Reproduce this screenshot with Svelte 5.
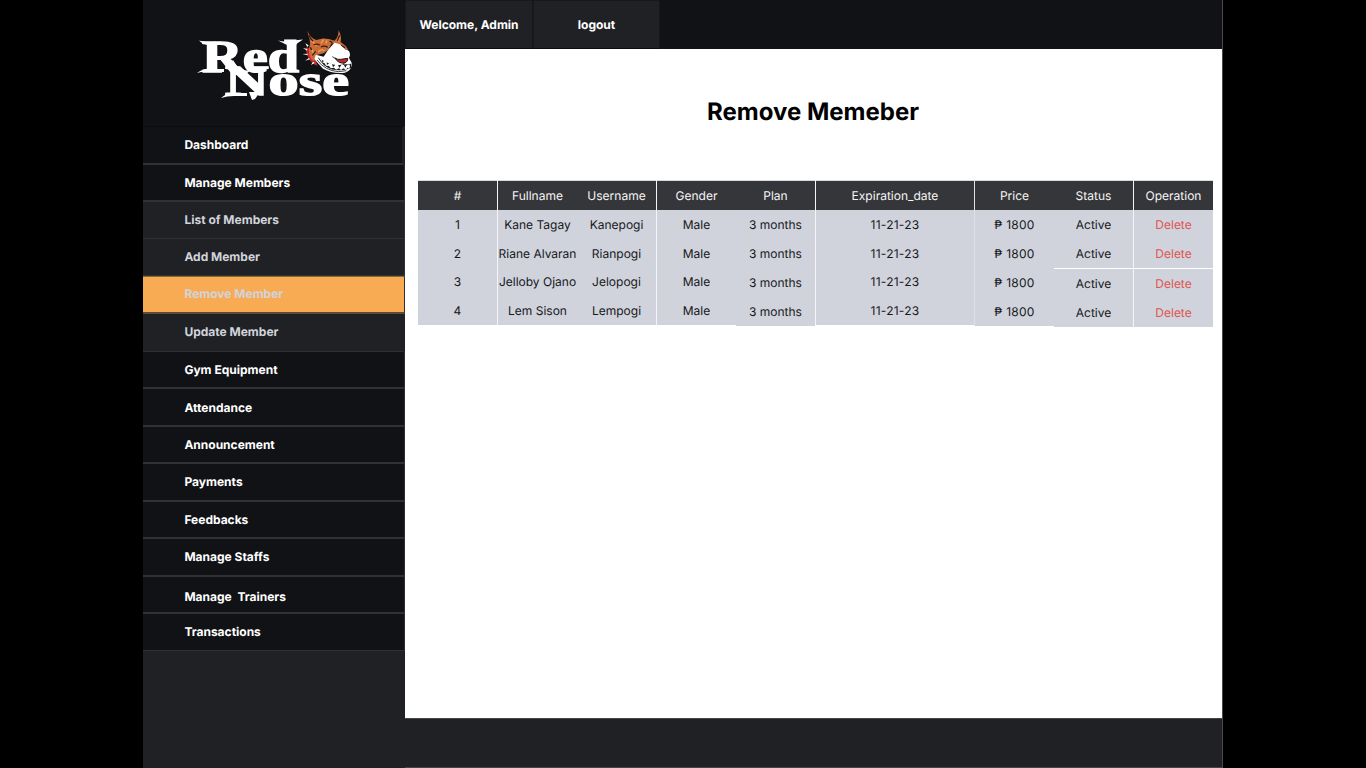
<script>
  const menu = [
    { label: 'Dashboard', kind: 'main inset', h: 39, shift: -1 },
    { label: 'Manage Members', kind: 'main', h: 37, shift: 0 },
    { label: 'List of Members', kind: 'sub', h: 37, shift: -2 },
    { label: 'Add Member', kind: 'sub', h: 37, shift: -2 },
    { label: 'Remove Member', kind: 'sub active', h: 38, shift: -2 },
    { label: 'Update Member', kind: 'sub inset', h: 38, shift: -2 },
    { label: 'Gym Equipment', kind: 'main', h: 37, shift: 0 },
    { label: 'Attendance', kind: 'main', h: 38, shift: 1 },
    { label: 'Announcement', kind: 'main', h: 37, shift: -1 },
    { label: 'Payments', kind: 'main', h: 38, shift: -2 },
    { label: 'Feedbacks', kind: 'main', h: 37, shift: -1 },
    { label: 'Manage Staffs', kind: 'main', h: 38, shift: -1 },
    { label: 'Manage\u00a0 Trainers', kind: 'main', h: 37, shift: 3 },
    { label: 'Transactions', kind: 'main last', h: 37, shift: -2 }
  ];

  const names = ['Kane Tagay', 'Riane Alvaran', 'Jelloby Ojano', 'Lem Sison'];
  const users = ['Kanepogi', 'Rianpogi', 'Jelopogi', 'Lempogi'];
  const four = (v) => [v, v, v, v];
  const columns = [
    { head: '#', cells: ['1', '2', '3', '4'], heights: [29, 29, 28, 29], line: '' },
    { head: 'Fullname', cells: names, heights: [29, 29, 28, 29], line: 'line' },
    { head: 'Username', cells: users, heights: [29, 29, 28, 29], line: '' },
    { head: 'Gender', cells: four('Male'), heights: [29, 29, 28, 29], line: 'line' },
    { head: 'Plan', cells: four('3 months'), heights: [29, 29, 29, 29], line: '' },
    { head: 'Expiration_date', cells: four('11-21-23'), heights: [29, 29, 28, 29], line: 'line', wide: true },
    { head: 'Price', cells: four('₱ 1800'), heights: [29, 29, 29, 29], line: 'faint', wide: true },
    { head: 'Status', cells: four('Active'), heights: [29, 29, 30, 29], line: '', split: true },
    { head: 'Operation', cells: four('Delete'), heights: [29, 29, 30, 29], line: 'line', split: true, danger: true }
  ];
</script>

<div class="screen">
  <div class="app">
    <aside>
      <div class="brand">
        <svg width="170" height="90" viewBox="0 0 170 90" aria-label="Red Nose">
          <g fill="#fff" stroke="#fff" font-family="'Liberation Serif', serif" font-weight="700">
            <text x="12" y="52" font-size="46" textLength="97" lengthAdjust="spacingAndGlyphs" stroke-width="1.4">Red</text>
            <text x="35" y="75" font-size="43" textLength="124" lengthAdjust="spacingAndGlyphs" stroke-width="1.4">Nose</text>
          </g>
          <g fill="#fff">
            <path d="M9 20.500q9 2.500 17 1v3H17q-5-.5-8-4M7 53q8-5 12-4h15v3H20q-7-1-13 1M43 40q7 13 18 10l-5 4q-9 1-17-9z" />
            <path d="M88 20.500q8 2 15 0l10-1-6 4-3 5-8-4zM31 78q6-5 11-5h15v3H44q-7 0-13 2M59 72h11l-5 7-3 1z" />
          </g>
          <g transform="translate(105 2) scale(.3333)">
            <path d="M28 70Q32 108 58 130L72 136 104 156 172 154 178 112 158 70 124 50 60 52z" fill="#111216" />
            <path d="M33 76Q33 100 44 114 54 128 68 131L63 118Q45 104 42 78z" fill="#c2262b" />
            <path d="M24 78l13 3-1 5zM22 96l15-1 2 5zM30 116l12-8 3 4zM48 129l6-10 5 4zM31 64l10 6-4 5z" fill="#fff" />
            <path d="M37 26Q46 48 64 54L80 50Q100 49 118 56 130 48 131 25 141 44 137 60L152 72 160 83Q140 82 130 66L110 64 99 84 86 94 62 100 57 118Q40 108 42 80 47 64 44 52 40 40 37 26z" fill="#cb6c37" />
            <path d="M48 55Q60 62 64 72M86 52L78 64M70 90Q78 80 88 86M50 82L56 94M96 56L92 64M132 46L130 58" fill="none" stroke="#f0a060" stroke-width="4" />
            <path d="M42 40Q46 50 54 58M56 68Q66 64 74 69M78 75Q88 69 98 76M52 100L62 88M134 40L127 57M138 70L150 77M104 57L112 62M46 76L50 84" fill="none" stroke="#3a1b14" stroke-width="4" />
            <path d="M118 62L133 66 150 82Q166 84 165 100L162 108 170 122Q172 145 150 152 112 156 84 140L58 112 62 98 86 104 99 84z" fill="#fff" />
            <path d="M68 106Q96 126 126 130L168 125 168 138Q140 149 108 142 82 132 68 106z" fill="#17181c" />
            <path d="M72 108l8 4 2 9 6-5 7 3 1 10 7-6 8 3 3 10 7-8 8 1 4 9 6-9 8 0 4 8 5-9 7-1 2 5-2 9-5-4-6 7-6-5-8 5-6-5-9 4-6-6-10 2-5-7-9-1-4-7-8-3z" fill="#fff" />
            <path d="M120 108Q128 114 138 112L158 109Q161 117 150 123 130 126 120 108z" fill="#c2262b" stroke="#17181c" stroke-width="3" />
            <path d="M112 104L122 110M146 124L146 129M66 114Q90 146 130 149L154 146" fill="none" stroke="#17181c" stroke-width="2.500" />
          </g>
        </svg>
      </div>
      <nav>
        {#each menu as item}
          <a class={item.kind} style="height:{item.h}px;padding-top:{4 + item.shift}px">{item.label}</a>
        {/each}
      </nav>
    </aside>
    <main>
      <header>
        <span class="tab">Welcome, Admin</span>
        <span class="tab">logout</span>
      </header>
      <section>
        <h1>Remove Memeber</h1>
        <div class="table">
          {#each columns as col}
            <div class="col {col.line}">
              <div class="th">{col.head}</div>
              {#each col.cells as cell, i}
                <div class="td" class:wide={col.wide} class:danger={col.danger} class:split={col.split && i === 2} style="height:{col.heights[i]}px">{cell}</div>
              {/each}
            </div>
          {/each}
        </div>
      </section>
      <footer></footer>
    </main>
  </div>
</div>

<style>
  :global(body) { margin: 0; background: #000; }
  .screen {
    height: 768px;
    overflow: hidden;
    background: #000;
    font-family: Inter, sans-serif;
    text-rendering: geometricPrecision;
  }
  .app {
    box-sizing: border-box;
    width: 1080px;
    height: 768px;
    margin-left: 143px;
    display: grid;
    grid-template-columns: 262px 818px;
  }
  aside { background: #202125; }
  .brand {
    box-sizing: border-box;
    height: 126px;
    padding: 20px 0 0 47px;
    background: #111216;
  }
  .brand svg { display: block; }
  nav { display: flex; flex-direction: column; }
  nav a {
    box-sizing: border-box;
    display: flex;
    align-items: center;
    padding-left: 41.4px;
    padding-bottom: 4px;
    font-size: 12px;
    font-weight: 700;
    white-space: pre;
    border-bottom: 2px solid #303134;
    border-right: 1px solid #303134;
    color: #fff;
    background: #111216;
  }
  nav a.sub { background: #202125; color: #d1d3da; border-bottom: 1px solid #303134; }
  nav a.active { background: #f9ab54; border-top: 1px solid #876541; border-bottom: 2px solid #5d4a36; }
  nav a.inset { border-right: 3px solid #202125; }
  nav a.main.inset { border-top: 1px solid #0b0c0f; }
  nav a.last { border-bottom-width: 1px; }
  main {
    display: grid;
    grid-template-rows: 49px 669px 50px;
    border-right: 1px solid #4a4a4c;
  }
  header { display: flex; background: #111216; }
  .tab {
    box-sizing: border-box;
    width: 127px;
    height: 49px;
    padding-bottom: 0;
    display: flex;
    align-items: center;
    justify-content: center;
    color: #fff;
    background: #202125;
    border: 1px solid #17181b;
    border-bottom-color: #0c0c0e;
    font-size: 12px;
    font-weight: 700;
  }
  .tab:first-child { width: 128px; }
  section { background: #fff; padding: 0 9px 0 13px; }
  h1 {
    margin: 0;
    padding-top: 46px;
    height: 85px;
    text-align: center;
    font-size: 24px;
    line-height: 34px;
    font-weight: 700;
    color: #000;
    text-indent: -5px;
  }
  .table {
    display: grid;
    grid-template-columns: 79px 80px 79px 80px 79px 159px 80px 79px 80px;
    align-items: start;
    color: #17181b;
    font-size: 12px;
  }
  .col { background: #d0d3db; }
  .line { border-left: 1px solid #f5f5f7; }
  .faint { border-left: 1px solid #dfe1e6; }
  .th, .td {
    box-sizing: border-box;
    display: flex;
    align-items: center;
    justify-content: center;
    padding-bottom: 1px;
    white-space: nowrap;
  }
  .th {
    height: 30px;
    background: #35363a;
    color: #f5f5f5;
    border-top: 1px solid #d9dade;
  }
  .wide { letter-spacing: .25px; }
  .danger { color: #df5350; }
  .split { border-top: 1px solid #fff; }
  footer {
    box-sizing: border-box;
    background: #202125;
    border-top: 1px solid #45464a;
    border-bottom: 1px solid #45464a;
  }
</style>
